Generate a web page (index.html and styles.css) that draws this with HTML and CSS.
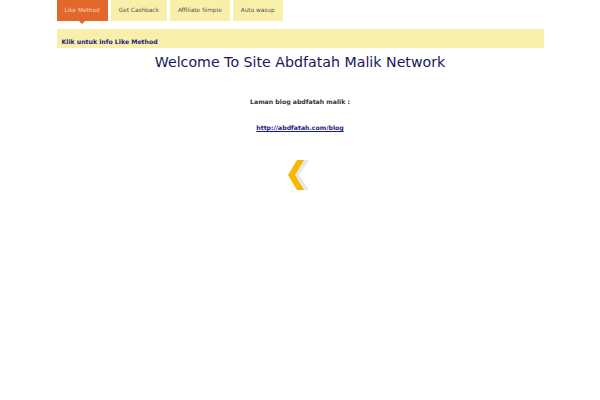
FILE: index.html
```html
<!DOCTYPE html>
<html lang="id">
<head>
  <meta charset="UTF-8" />
  <title>Abdfatah Malik Network</title>
<link rel="stylesheet" href="styles.css">
</head>
<body>
  <div class="wrap">
    <ul class="tabs">
      <li class="active"><a href="#">Like Method</a></li>
      <li><a href="#">Get Cashback</a></li>
      <li><a href="#">Affiliate Simple</a></li>
      <li><a href="#">Auto wasup</a></li>
    </ul>
    <div class="info-bar"><a href="#">Klik untuk info Like Method</a></div>
    <h1>Welcome To Site Abdfatah Malik Network</h1>
    <p class="lead">Laman blog abdfatah malik :</p>
    <p class="lead"><a href="#">http://abdfatah.com/blog</a></p>
    <div class="arrow">
      <svg width="24" height="32" viewBox="0 0 24 32">
        <polygon points="14,1 21,1 11,16 21,31 14,31 4,16" fill="#e8e8e8"/>
        <polygon points="9,1 16,1 7,16 16,31 9,31 0,16" fill="#f6b800"/>
      </svg>
    </div>
  </div>
</body>
</html>
```

FILE: styles.css
```css
* {
  box-sizing: border-box;
}

body {
  margin: 0;
  background: #fff;
  font-family: 'DejaVu Sans', Verdana, sans-serif;
}

.wrap {
  width: 487px;
  margin: 0 auto;
}

.tabs {
  list-style: none;
  margin: 0;
  padding: 0;
  display: flex;
  gap: 3px;
}

.tabs li {
  position: relative;
}

.tabs li a {
  display: block;
  height: 21px;
  line-height: 20px;
  padding: 0 8px;
  background: #f8f0aa;
  color: #555;
  font-size: 5.8px;
  text-decoration: none;
}

.tabs li.active a {
  background: #e2672b;
  color: #f9d6b5;
}

.tabs li.active::after {
  content: "";
  position: absolute;
  left: 50%;
  top: 21px;
  margin-left: -3px;
  border: 3px solid transparent;
  border-top-color: #e2672b;
  border-bottom: 0;
}

.info-bar {
  margin-top: 8px;
  height: 19px;
  line-height: 19px;
  padding: 0 5px;
  background: #f8f0aa;
}

.info-bar a {
  color: #1a1a80;
  font-size: 6.2px;
  font-weight: bold;
  text-decoration: none;
}

h1 {
  margin: 6px 0 0;
  text-align: center;
  font-size: 14.2px;
  font-weight: normal;
  color: #161660;
}

.lead {
  margin: 0;
  text-align: center;
  font-size: 6.2px;
  font-weight: bold;
  color: #333;
}

h1 + .lead {
  margin-top: 28px;
}

.lead + .lead {
  margin-top: 19px;
}

.lead a {
  color: #1a1a80;
}

.arrow {
  margin-top: 28px;
  text-align: center;
}
```
